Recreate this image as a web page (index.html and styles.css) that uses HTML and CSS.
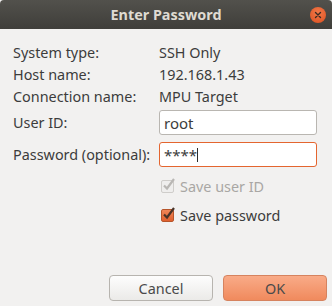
FILE: index.html
```html
<!DOCTYPE html>
<html>
<head>
<meta charset="utf-8">
<link rel="stylesheet" href="styles.css">
</head>
<body>
<div class="dialog">
  <div class="titlebar">
    <span></span>
    <span class="title">Enter Password</span>
    <span class="close">
      <svg width="16" height="16" viewBox="0 0 16 16"><path d="M5.5 5.5 L10.5 10.5 M10.5 5.5 L5.5 10.5" stroke="#3a2a22" stroke-width="1.4" stroke-linecap="round"/></svg>
    </span>
  </div>
  <div class="content">
    <div class="row info"><span class="label">System type:</span><span class="value">SSH Only</span></div>
    <div class="row info"><span class="label">Host name:</span><span class="value">192.168.1.43</span></div>
    <div class="row info"><span class="label">Connection name:</span><span class="value">MPU Target</span></div>
    <div class="row field first"><span class="label">User ID:</span><div class="input">root</div></div>
    <div class="row field"><span class="label">Password (optional):</span><div class="input focused">****<span class="caret"></span></div></div>
    <div class="row check first disabled"><span class="label"></span>
      <span class="box">
        <svg width="16" height="16" viewBox="0 0 16 16"><path d="M4 8.5 L7 11.5 L14 2" fill="none" stroke="#b9b7b4" stroke-width="2.2"/></svg>
      </span>
      <span class="ctext">Save user ID</span>
    </div>
    <div class="row check"><span class="label"></span>
      <span class="box on">
        <svg width="16" height="16" viewBox="0 0 16 16"><path d="M4 8.5 L7 11.5 L14 2" fill="none" stroke="#4a3328" stroke-width="2.2"/></svg>
      </span>
      <span class="ctext">Save password</span>
    </div>
  </div>
  <div class="buttons">
    <button class="btn">Cancel</button>
    <button class="btn ok">OK</button>
  </div>
</div>
</body>
</html>
```
FILE: styles.css
```css
html, body {
  margin: 0;
  padding: 0;
  background: #f2f1f0;
}
.dialog {
  width: 332px;
  height: 306px;
  display: flex;
  flex-direction: column;
  font-family: "Noto Sans", sans-serif;
  font-size: 14.4px;
  color: #3c3c3c;
  background: #f2f1f0;
}
.titlebar {
  height: 29px;
  flex: none;
  display: grid;
  grid-template-columns: 1fr auto 1fr;
  align-items: center;
  background: linear-gradient(#52514c, #3f3e3a);
  border-radius: 4px 4px 0 0;
}
.title {
  color: #dfdbd2;
  font-weight: bold;
  font-size: 14.4px;
}
.close {
  justify-self: end;
  margin-right: 6px;
  width: 16px;
  height: 16px;
  border-radius: 50%;
  background: radial-gradient(circle at 50% 35%, #f27a4a, #db4f1f);
  display: flex;
}
.content {
  flex: 1;
  padding: 12px 0 0 13px;
  display: flex;
  flex-direction: column;
}
.row {
  display: flex;
  align-items: center;
}
.label {
  width: 146px;
  flex: none;
}
.info {
  height: 22px;
}
.field {
  height: 25px;
  margin-top: 7px;
}
.field.first {
  margin-top: 3px;
}
.input {
  box-sizing: border-box;
  width: 158px;
  height: 25px;
  border: 1px solid #b9b6b1;
  border-radius: 3px;
  background: #fff;
  padding: 0 4px;
  display: flex;
  align-items: center;
  font-size: 15px;
  color: #3c3c3c;
}
.input.focused {
  border-color: #e4652f;
}
.caret {
  width: 1px;
  height: 14px;
  background: #2c2c2c;
}
.check {
  height: 22px;
  margin-top: 7px;
}
.check.first {
  margin-top: 8px;
}
.box {
  box-sizing: border-box;
  width: 13px;
  height: 13px;
  margin-left: 2px;
  border: 1px solid #cfcdca;
  border-radius: 2px;
  background: #efeeed;
  position: relative;
}
.box svg {
  position: absolute;
  left: -2px;
  top: -4px;
}
.box.on {
  border-color: #b6552a;
  background: linear-gradient(#f08658, #e0602e);
}
.ctext {
  margin-left: 6px;
}
.disabled .ctext {
  color: #a9a7a4;
}
.buttons {
  flex: none;
  display: flex;
  justify-content: flex-end;
  gap: 10px;
  padding: 0 5px 5px 0;
}
.btn {
  box-sizing: border-box;
  width: 104px;
  height: 26px;
  border: 1px solid #b7b4af;
  border-radius: 4px;
  background: linear-gradient(#fdfdfd, #ebeae8);
  font-family: "Noto Sans", sans-serif;
  font-size: 14.4px;
  color: #4a4a4a;
  padding: 0;
}
.btn.ok {
  border-color: #d6835f;
  background: linear-gradient(#f9ab88, #f08a5d);
}
```
